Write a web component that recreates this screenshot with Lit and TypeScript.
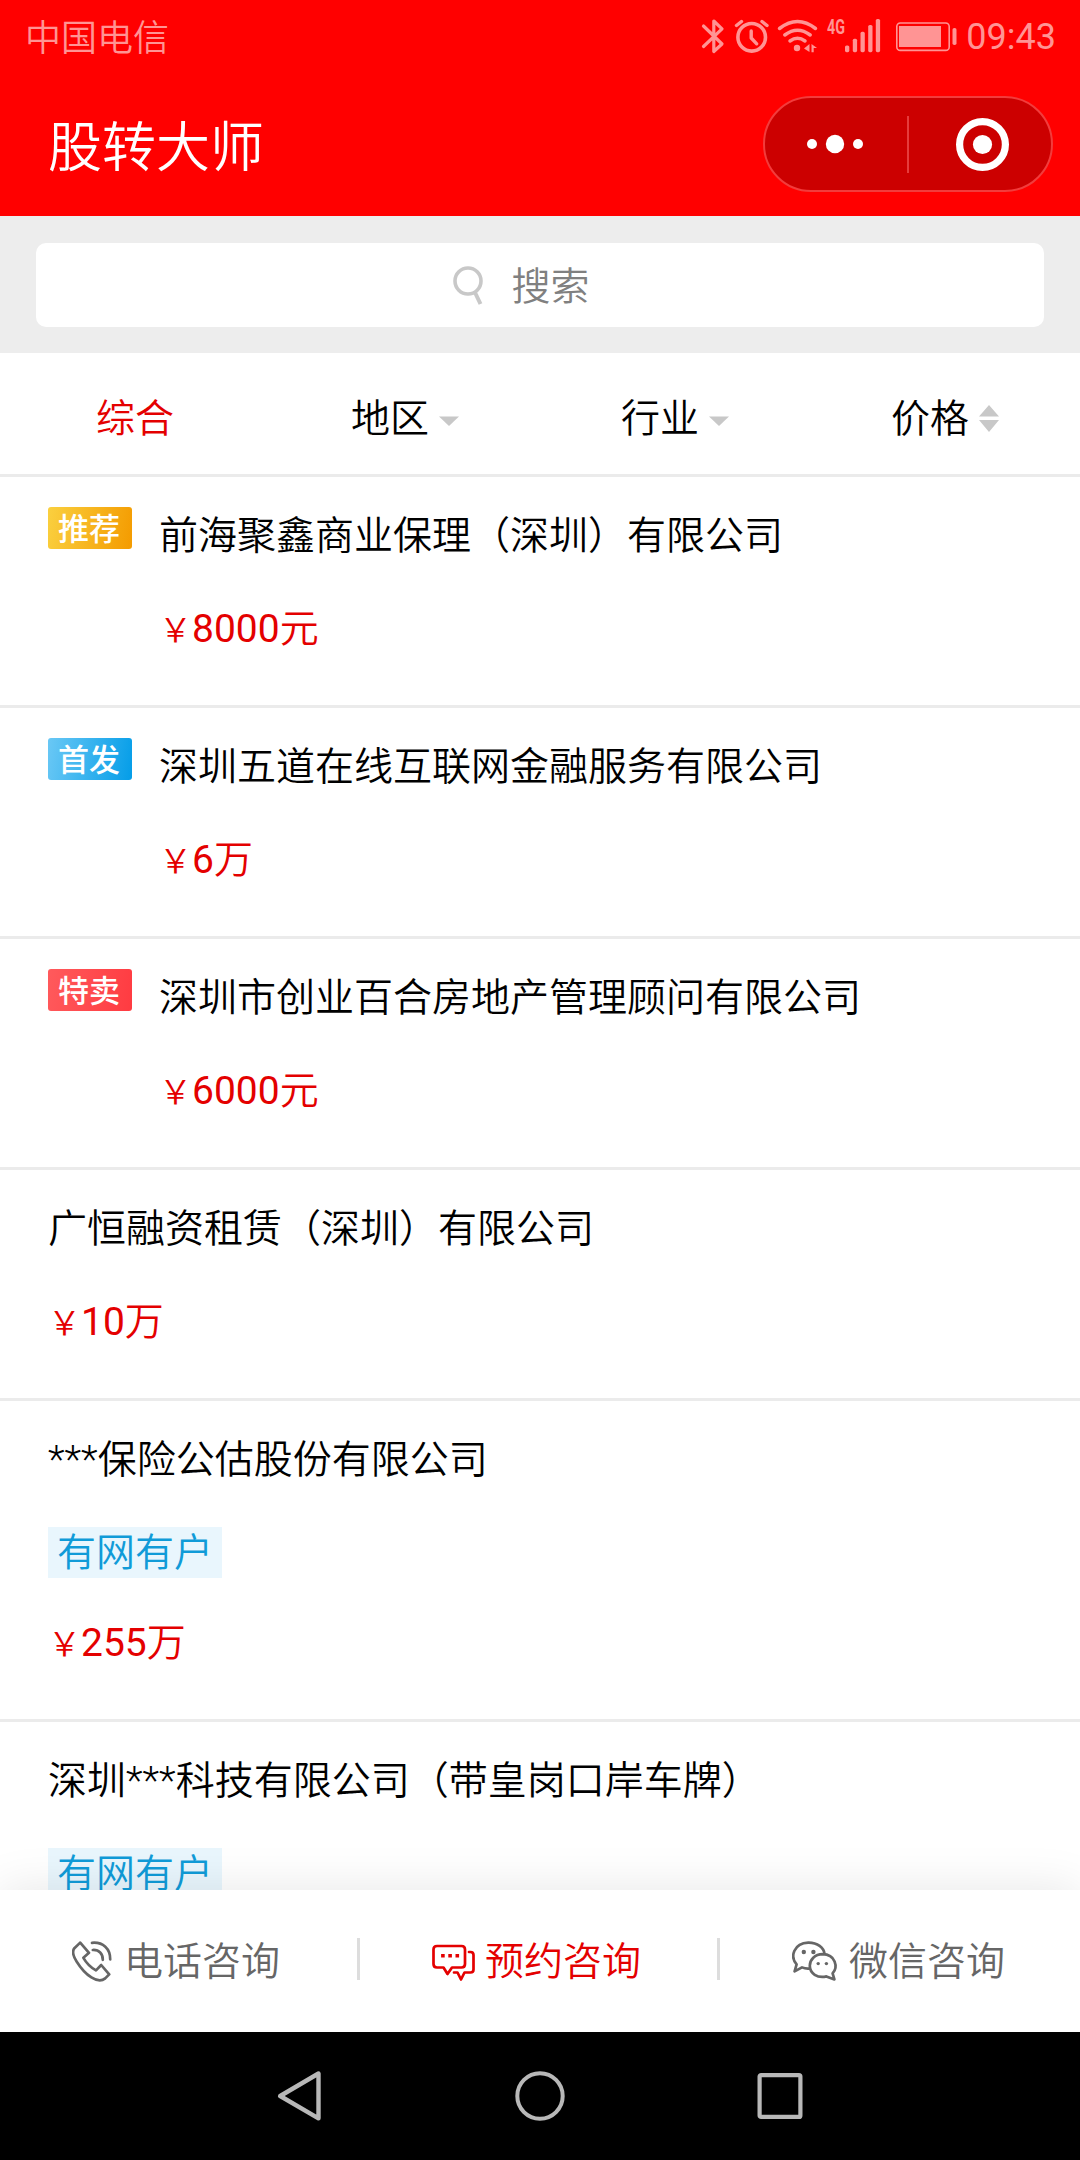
import { LitElement, html, svg, css, nothing } from "lit";
import { customElement, property } from "lit/decorators.js";

interface Company {
  name: string;
  amount?: string;
  unit?: string;
  badge?: { text: string; kind: string };
  tag?: string;
}

const companies: Company[] = [
  { name: "前海聚鑫商业保理（深圳）有限公司", amount: "8000", unit: "元", badge: { text: "推荐", kind: "gold" } },
  { name: "深圳五道在线互联网金融服务有限公司", amount: "6", unit: "万", badge: { text: "首发", kind: "blue" } },
  { name: "深圳市创业百合房地产管理顾问有限公司", amount: "6000", unit: "元", badge: { text: "特卖", kind: "red" } },
  { name: "广恒融资租赁（深圳）有限公司", amount: "10", unit: "万" },
  { name: "***保险公估股份有限公司", amount: "255", unit: "万", tag: "有网有户" },
  { name: "深圳***科技有限公司（带皇岗口岸车牌）", tag: "有网有户" },
];

const signalBars = [
  { x: 845, y: 45.5 },
  { x: 852.8, y: 38.7 },
  { x: 860.5, y: 31.8 },
  { x: 868.2, y: 25 },
  { x: 875.8, y: 19 },
];

@customElement("status-bar")
class StatusBar extends LitElement {
  static styles = css`
    :host { display: flex; justify-content: space-between; align-items: center; height: 72px; padding: 0 24px 0 25px; color: #ff9494; font-size: 36px; line-height: 72px; }
    .carrier { padding-top: 5px; font-weight: 350; }
    .right { display: flex; align-items: center; gap: 9px; }
    .time { padding-top: 2px; }
    .icons { display: block; width: 257px; height: 72px; }
    .four-g { font: 700 20px Roboto, sans-serif; }
  `;
  render() {
    return html`
      <span class="carrier">中国电信</span>
      <div class="right">
        <svg class="icons" viewBox="700 0 257 72" fill="none" stroke="#ff9494" stroke-width="3.2" stroke-linecap="round" stroke-linejoin="round">
          <path d="M703.5 26 722 44 713.8 51.5V21L722 28.8 703.5 46.5" />
          <circle cx="751.7" cy="37.3" r="13.8" stroke-width="3.6" />
          <path d="M751.2 31v7l5.5 5.8" stroke-width="3.4" />
          <path d="M736.5 25.5l5-4M767 25.5l-5-4" stroke-width="3.4" />
          <path d="M779.5 28.5Q797.5 14.5 815.5 28.5M784.8 35Q797.5 25.5 810.2 35M790 41Q797.5 35.5 805 41" stroke-width="3.5" />
          <g fill="#ff9494" stroke="none">
            <circle cx="797" cy="48" r="3.2" />
            <path d="M804 48.5 809.5 44v8zM811.5 44 817 48h-3.3v4.3h-2.2z" />
            <text class="four-g" x="827" y="33.5" textLength="18" lengthAdjust="spacingAndGlyphs">4G</text>
            ${signalBars.map((b) => svg`<rect x=${b.x} y=${b.y} width="4.3" height=${52.2 - b.y} rx="1.6" />`)}
            <rect x="899" y="26" width="42" height="21" />
            <rect x="952.5" y="28" width="4" height="17" rx="1.8" />
          </g>
          <rect x="896.8" y="23" width="52.4" height="27.4" rx="3.5" stroke-width="1.6" />
        </svg>
        <span class="time">09:43</span>
      </div>
    `;
  }
}

@customElement("title-bar")
class TitleBar extends LitElement {
  static styles = css`
    :host { display: flex; justify-content: space-between; align-items: center; height: 144px; padding: 0 27px 0 48px; color: #fff; }
    .title { padding-top: 9px; font-size: 54px; font-weight: 350; line-height: 72px; }
    .capsule { display: flex; align-items: center; box-sizing: border-box; width: 290px; height: 96px; border: 2px solid #f23c3c; border-radius: 48px; background: #cc0000; }
    .half { flex: 1; display: flex; align-items: center; justify-content: center; }
    .line { width: 2px; height: 57px; background: #e63c3c; }
    svg { display: block; }
  `;
  render() {
    return html`
      <span class="title">股转大师</span>
      <div class="capsule">
        <div class="half">
          <svg width="60" height="20" viewBox="0 0 60 20" fill="#fff"><circle cx="6" cy="10" r="5" /><circle cx="29" cy="10" r="9.2" /><circle cx="52" cy="10" r="5" /></svg>
        </div>
        <div class="line"></div>
        <div class="half">
          <svg width="60" height="60" viewBox="0 0 60 60"><circle cx="32.5" cy="30.5" r="22.9" fill="none" stroke="#fff" stroke-width="7.2" /><circle cx="32.5" cy="30.5" r="9.6" fill="#fff" /></svg>
        </div>
      </div>
    `;
  }
}

@customElement("search-box")
class SearchBox extends LitElement {
  static styles = css`
    :host { display: block; box-sizing: border-box; height: 137px; padding: 27px 36px 26px; background: #ededed; }
    .field { display: flex; align-items: center; justify-content: center; box-sizing: border-box; height: 84px; padding-right: 39px; border-radius: 10px; background: #fff; color: #808080; font-size: 39px; font-weight: 350; line-height: 80px; }
    .label { padding-top: 4px; }
    svg { display: block; margin: 2px 27px 0 0; }
  `;
  render() {
    return html`
      <div class="field">
        <svg width="33" height="42" viewBox="0 0 33 42" fill="none" stroke="#c8c8c8" stroke-width="3.6"><circle cx="17" cy="16" r="13" /><path d="M24 27.5 29.5 39" stroke-width="4" /></svg>
        <span class="label">搜索</span>
      </div>
    `;
  }
}

@customElement("filter-tabs")
class FilterTabs extends LitElement {
  static styles = css`
    :host { display: grid; grid-template-columns: repeat(4, 1fr); height: 121px; border-bottom: 3px solid #ebebeb; color: #000; font-size: 39px; font-weight: 350; line-height: 80px; }
    .tab { display: flex; align-items: center; justify-content: center; gap: 10px; padding-top: 8px; height: 113px; }
    .tab span { padding-top: 3px; }
    .active { color: #e40000; }
    svg { display: block; }
  `;
  render() {
    const down = html`<svg width="20" height="28" viewBox="0 0 20 28" fill="#c8c8c8"><path d="M0 12.5h20L10 22z" /></svg>`;
    return html`
      <div class="tab active"><span>综合</span></div>
      <div class="tab"><span>地区</span>${down}</div>
      <div class="tab"><span>行业</span>${down}</div>
      <div class="tab"><span>价格</span>
        <svg width="20" height="28" viewBox="0 0 20 28" fill="#c8c8c8"><path d="M0 12.5h20L10 1zM0 16h20L10 28z" /></svg>
      </div>
    `;
  }
}

@customElement("company-row")
class CompanyRow extends LitElement {
  static styles = css`
    :host { display: flex; align-items: flex-start; gap: 27px; padding: 30px 48px 49px; border-bottom: 3px solid #ebebeb; }
    .badge { flex: none; box-sizing: border-box; width: 84px; height: 42px; padding: 2px 2px 0 0; border-radius: 3px; color: #fff; font-size: 31px; font-weight: 500; line-height: 42px; text-align: center; }
    .gold { background: linear-gradient(100deg, #fad03f, #f49b00); }
    .blue { background: linear-gradient(100deg, #6ac8f5, #049de8); }
    .red { background: linear-gradient(100deg, #ff5a5c, #ff3b41); }
    .body { display: flex; flex-direction: column; align-items: flex-start; }
    .name { height: 54px; padding-top: 2px; line-height: 54px; font-size: 39px; font-weight: 350; white-space: nowrap; color: #000; }
    .tag { box-sizing: border-box; height: 51px; margin-top: 40px; padding: 1px 9px 0; background: #e9f6fd; color: #109bd8; font-size: 39px; font-weight: 350; line-height: 51px; }
    .price { display: flex; align-items: baseline; height: 54px; margin-top: 39px; color: #e40000; font-size: 39px; font-weight: 350; line-height: 54px; }
    .tag + .price { margin-top: 38px; }
    .yen { font-size: 33px; }
    .amount { font-weight: 400; }
  `;
  @property({ attribute: false }) company!: Company;
  render() {
    const c = this.company;
    return html`
      ${c.badge ? html`<div class="badge ${c.badge.kind}">${c.badge.text}</div>` : nothing}
      <div class="body">
        <div class="name">${c.name}</div>
        ${c.tag ? html`<div class="tag">${c.tag}</div>` : nothing}
        ${c.amount ? html`<div class="price"><span class="yen">￥</span><span class="amount">${c.amount}</span><span>${c.unit}</span></div>` : nothing}
      </div>
    `;
  }
}

@customElement("contact-bar")
class ContactBar extends LitElement {
  static styles = css`
    :host { position: relative; display: grid; grid-template-columns: repeat(3, 1fr); height: 142px; background: #fff; box-shadow: 0 0 45px rgba(0, 0, 0, 0.1); color: #666; font-size: 39px; font-weight: 350; line-height: 60px; }
    .item { display: flex; align-items: center; box-sizing: border-box; padding-left: 72px; }
    .item:not(:last-child) { background: linear-gradient(#ddd, #ddd) no-repeat right 0 top 48px / 3px 42px; }
    .active { color: #e40000; }
    .icon { flex: none; display: block; height: 48px; }
    .label { margin-left: -1px; padding-top: 1px; }
    .phone { width: 53px; }
    .chat { width: 54px; }
    .wechat { width: 58px; }
  `;
  render() {
    return html`
      <div class="item">
        <svg class="icon phone" viewBox="0 0 53 48" fill="none" stroke="currentColor" stroke-width="2.7" stroke-linejoin="round" stroke-linecap="round">
          <path d="M8.2 5.6 2.4 11.2C.2 14 1 18.8 4.6 24.4 8.6 30.8 13.8 36.8 19.4 40.4 25 44 30 44 33.2 41.4L37.2 37.4 29.2 28 24 33.4C18.4 30.2 14.6 26.4 11.4 20.8L17 15.8Z" />
          <path d="M20 5.8C31 4.8 38.4 11.8 38.2 22.4M20.8 13C27 12.6 31 16.8 30.8 22.8" />
        </svg>
        <span class="label">电话咨询</span>
      </div>
      <div class="item active">
        <svg class="icon chat" viewBox="0 0 54 48" fill="none" stroke="currentColor" stroke-width="2.7" stroke-linejoin="round" stroke-linecap="round">
          <path d="M5 9H29.5Q33 9 33 12.5V27Q33 30.5 29.5 30.5H20L15.5 37 11.5 30.5H5Q1.5 30.5 1.5 27V12.5Q1.5 9 5 9Z" />
          <path d="M37 15H38.5Q41.5 15 41.5 18V32.5Q41.5 35.5 38.5 35.5H32.5L29 42.5 25.5 35.5H22" />
          <path d="M9.1 17h3.6v3.6h-3.6zM16.3 17h3.6v3.6h-3.6zM23.5 17h3.6v3.6h-3.6z" fill="currentColor" stroke="none" />
        </svg>
        <span class="label">预约咨询</span>
      </div>
      <div class="item">
        <svg class="icon wechat" viewBox="0 0 58 48" fill="none" stroke="currentColor" stroke-width="2.7" stroke-linejoin="round">
          <path d="M17.6 31.6Q13.4 32 10 30.4L2.6 34.4 4.6 27.4C-2.4 19.4 2 6.2 16.2 5.6 25.4 5.4 32 10.8 32.6 17.2" />
          <path d="M30.6 17.2C22.8 17.2 17.8 22.8 17.8 28.8 17.8 36.4 25.4 41.6 34.4 39.4L42.4 42.4 40.6 36.4C46.4 29.6 43.4 17.6 30.6 17.2Z" />
          <g fill="currentColor" stroke="none"><circle cx="11.8" cy="15" r="2.2" /><circle cx="21.4" cy="15" r="2.2" /><circle cx="26.2" cy="26.6" r="1.7" /><circle cx="34.4" cy="26.6" r="1.7" /></g>
        </svg>
        <span class="label">微信咨询</span>
      </div>
    `;
  }
}

@customElement("system-nav")
class SystemNav extends LitElement {
  static styles = css`
    :host { display: flex; align-items: center; justify-content: center; gap: 190px; height: 128px; background: #000; }
    svg { display: block; width: 50px; height: 50px; }
  `;
  render() {
    return html`
      <svg viewBox="0 0 50 50" fill="none" stroke="#b8b8b8" stroke-width="4.4" stroke-linejoin="round"><path d="M43.5 2.5V47.3L5.2 25Z" /></svg>
      <svg viewBox="0 0 50 50" fill="none" stroke="#b8b8b8" stroke-width="4"><circle cx="25" cy="25" r="22.7" /></svg>
      <svg viewBox="0 0 50 50" fill="none" stroke="#b8b8b8" stroke-width="4.2"><rect x="4.6" y="4.1" width="40.8" height="41.8" rx="1.5" /></svg>
    `;
  }
}

@customElement("app-root")
class AppRoot extends LitElement {
  static styles = css`
    :host { display: flex; flex-direction: column; width: 1080px; height: 2160px; overflow: hidden; background: #fff; font-family: Roboto, "Noto Sans CJK SC", sans-serif; }
    .header { flex: none; background: #ff0000; }
    .fixed { flex: none; }
    .list { flex: 1; min-height: 0; overflow: hidden; }
  `;
  render() {
    return html`
      <div class="header"><status-bar></status-bar><title-bar></title-bar></div>
      <search-box class="fixed"></search-box>
      <filter-tabs class="fixed"></filter-tabs>
      <div class="list">${companies.map((c) => html`<company-row .company=${c}></company-row>`)}</div>
      <contact-bar class="fixed"></contact-bar>
      <system-nav class="fixed"></system-nav>
    `;
  }
}
